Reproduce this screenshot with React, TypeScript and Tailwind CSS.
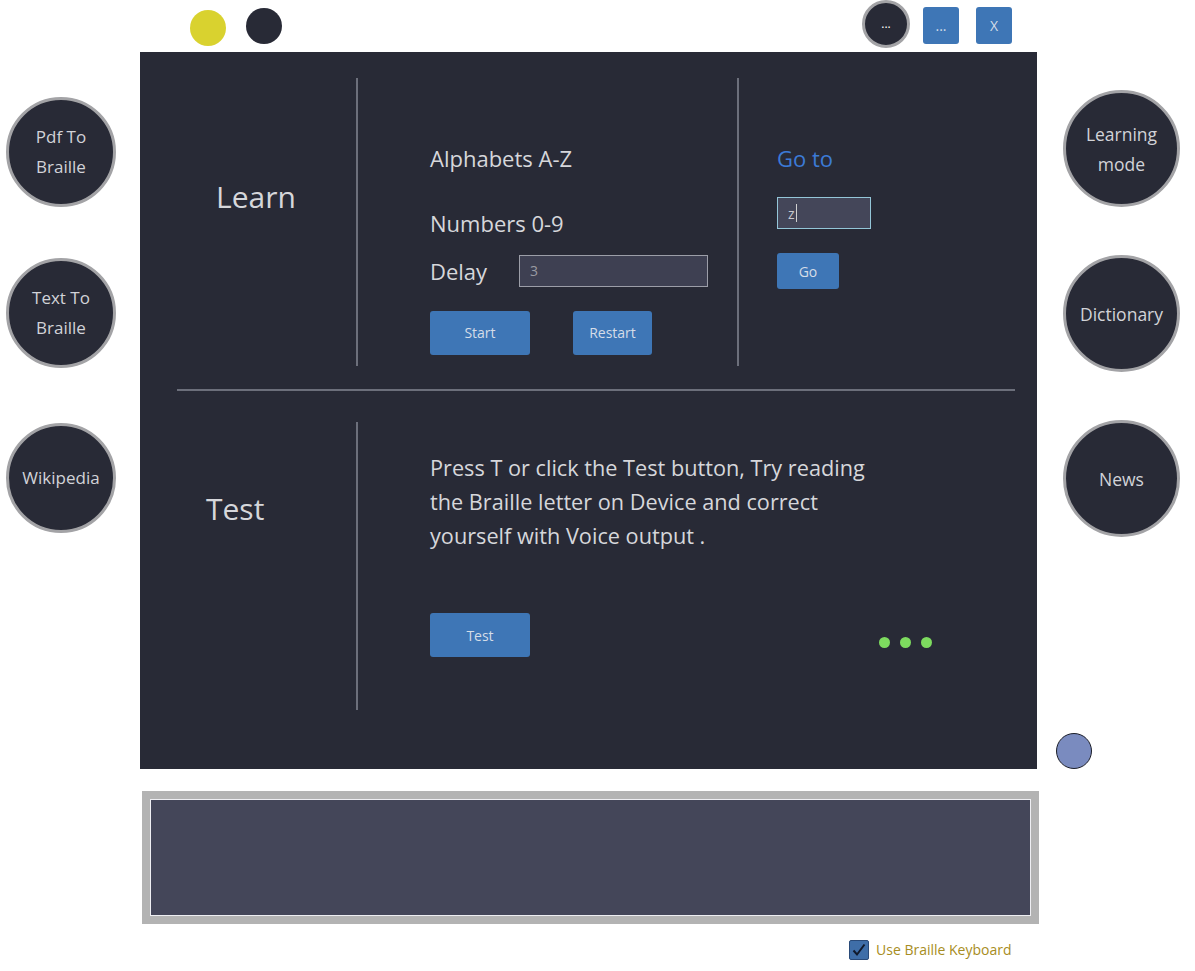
const font = "font-['Open_Sans','Noto_Sans',sans-serif]";

function SideCircle({ lines, size }: { lines: string[]; size: "sm" | "lg" }) {
  const dim = size === "sm" ? "w-[110px] h-[110px] text-[17px]" : "w-[117px] h-[117px] text-[17.5px]";
  return (
    <div
      className={`${dim} rounded-full bg-[#282a36] border-[3px] border-[#a3a3a6] flex flex-col items-center justify-center text-[#d2d3d8] leading-[30px]`}
    >
      {lines.map((l) => (
        <span key={l}>{l}</span>
      ))}
    </div>
  );
}

function BlueButton({ label, className }: { label: string; className: string }) {
  return (
    <button className={`${className} bg-[#3e76b6] rounded-[3px] text-[14px] text-[#d5dde8] flex items-center justify-center`}>
      {label}
    </button>
  );
}

export default function App() {
  return (
    <div className={`w-[1195px] h-[971px] bg-white overflow-hidden ${font}`}>
      {/* top bar */}
      <div className="flex h-[52px]">
        <div className="w-9 h-9 rounded-full bg-[#d9d22f] ml-[190px] mt-[10px]" />
        <div className="w-9 h-9 rounded-full bg-[#282a36] ml-[20px] mt-[8px]" />
        <div className="ml-auto mr-[183px] flex">
          <div className="w-[48px] h-[48px] rounded-full bg-[#282a36] border-[3px] border-[#a3a3a6] flex items-center justify-center text-white text-[12px] leading-none">
            ...
          </div>
          <BlueButton label="..." className="w-9 h-[37px] ml-[13px] mt-[7px] text-[#b9c8dc]" />
          <BlueButton label="X" className="w-9 h-[37px] ml-[17px] mt-[7px]" />
        </div>
      </div>

      <div className="flex">
        {/* left menu */}
        <div className="w-[140px] pl-[6px] pt-[45px] flex flex-col">
          <SideCircle size="sm" lines={["Pdf To", "Braille"]} />
          <div className="mt-[51px]">
            <SideCircle size="sm" lines={["Text To", "Braille"]} />
          </div>
          <div className="mt-[55px]">
            <SideCircle size="sm" lines={["Wikipedia"]} />
          </div>
        </div>

        {/* main panel */}
        <div className="w-[897px] h-[717px] bg-[#282a36] pt-[26px] flex flex-col">
          <div className="flex h-[288px]">
            <div className="w-[216px] pl-[76px] pt-[99px] text-[30px] leading-[40px] text-[#d6d7db]">Learn</div>
            <div className="w-[2px] bg-[#6c6f7b]" />
            <div className="w-[379px] pl-[72px] pt-[66px] flex flex-col text-[22px] leading-[28px] text-[#d6d7db]">
              <span>Alphabets A-Z</span>
              <span className="mt-[37px]">Numbers 0-9</span>
              <div className="mt-[18px] flex items-center h-[32px]">
                <span className="w-[89px]">Delay</span>
                <div className="w-[189px] h-[32px] bg-[#3e4052] border border-[#9c9ea8] flex items-center pl-[10px] text-[14px] text-[#9a9ba3]">
                  3
                </div>
              </div>
              <div className="mt-[24px] flex">
                <BlueButton label="Start" className="w-[100px] h-[44px]" />
                <BlueButton label="Restart" className="w-[79px] h-[44px] ml-[43px]" />
              </div>
            </div>
            <div className="w-[2px] bg-[#6c6f7b]" />
            <div className="pl-[38px] pt-[66px] flex flex-col">
              <span className="text-[22px] leading-[28px] text-[#3c7ad6]">Go to</span>
              <div className="mt-[25px] w-[94px] h-[32px] bg-[#444659] border border-[#94c6d8] flex items-center pl-[10px] text-[14px] text-[#c8c9d0]">
                z<span className="w-px h-[18px] bg-[#d0d0d0] ml-[1px]" />
              </div>
              <BlueButton label="Go" className="mt-[24px] w-[62px] h-[36px]" />
            </div>
          </div>

          <div className="mt-[23px] ml-[37px] w-[838px] h-[2px] bg-[#6c6f7b]" />

          <div className="flex h-[288px] mt-[31px]">
            <div className="w-[216px] pl-[66px] pt-[67px] text-[30px] leading-[40px] text-[#d6d7db]">Test</div>
            <div className="w-[2px] bg-[#6c6f7b]" />
            <div className="pl-[72px] pt-[29px] flex flex-col">
              <p className="text-[21.7px] leading-[34px] text-[#d6d7db]">
                Press T or click the Test button, Try reading
                <br />
                the Braille letter on Device and correct
                <br />
                yourself with Voice output .
              </p>
              <div className="mt-[60px] flex items-start">
                <BlueButton label="Test" className="w-[100px] h-[44px]" />
                <div className="ml-[349px] mt-[24px] flex gap-[10px]">
                  <span className="w-[11px] h-[11px] rounded-full bg-[#7ddb5f]" />
                  <span className="w-[11px] h-[11px] rounded-full bg-[#7ddb5f]" />
                  <span className="w-[11px] h-[11px] rounded-full bg-[#7ddb5f]" />
                </div>
              </div>
            </div>
          </div>
        </div>

        {/* right menu */}
        <div className="pl-[26px] pt-[38px] flex flex-col">
          <SideCircle size="lg" lines={["Learning", "mode"]} />
          <div className="mt-[48px]">
            <SideCircle size="lg" lines={["Dictionary"]} />
          </div>
          <div className="mt-[48px]">
            <SideCircle size="lg" lines={["News"]} />
          </div>
          <div className="mt-[196px] -ml-[7px] w-9 h-9 rounded-full bg-[#7a8bbf] border border-[#1c1e28]" />
        </div>
      </div>

      {/* output box */}
      <div className="ml-[142px] mt-[22px] w-[897px] h-[133px] bg-[#b3b3b3] p-[8px]">
        <div className="w-full h-full bg-[#444659] border-[1.5px] border-[#eeeef2]" />
      </div>

      <div className="pl-[849px] mt-[15px] flex items-center">
        <div className="w-[20px] h-[20px] rounded-[2px] bg-[#3f6ea8] border border-[#2a4a78] flex items-center justify-center">
          <svg viewBox="0 0 16 16" className="w-[16px] h-[16px]">
            <path d="M2.5 8.5 L6 12.5 L13.5 2.5" fill="none" stroke="#111a2c" strokeWidth="2" />
          </svg>
        </div>
        <span className="ml-[7px] text-[14px] text-[#a78d22]">Use Braille Keyboard</span>
      </div>
    </div>
  );
}
